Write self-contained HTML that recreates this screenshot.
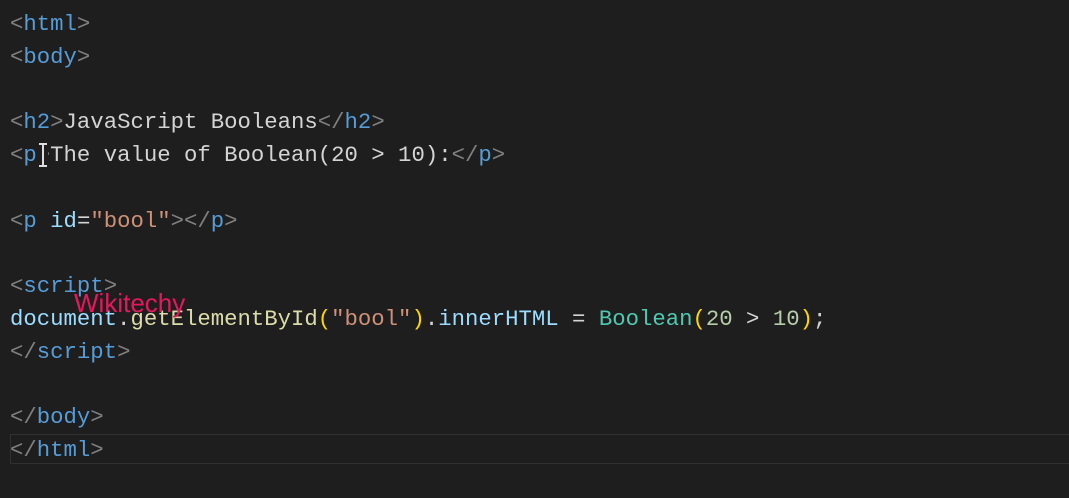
<!DOCTYPE html>
<html><head><style>
html,body{margin:0;padding:0;background:#1e1e1e;width:1069px;height:498px;overflow:hidden}
#c{position:absolute;left:10px;top:8px;font-family:"Liberation Mono",monospace;font-size:22.3px;line-height:32.75px;color:#d4d4d4;white-space:pre}
.b{color:#808080}.t{color:#569cd6}.a{color:#9cdcfe}.s{color:#ce9178}.f{color:#dcdcaa}.c{color:#4ec9b0}.n{color:#b5cea8}.y{color:#ffd700}
#cur{position:absolute;left:10px;top:434px;width:1070px;height:30px;border:1px solid #303030;box-sizing:border-box}
#w{position:absolute;left:74px;top:288px;font-family:"Liberation Sans",sans-serif;font-size:26px;color:#e8175d}
#ib{position:absolute;left:38px;top:143px;width:10px;height:24px;background:#1e1e1e}
#ib:before{content:"";position:absolute;left:4px;top:1px;width:2px;height:22px;background:#ddd}
#ib:after{content:"";position:absolute;left:1px;top:0;width:8px;height:24px;border-top:2px solid #ddd;border-bottom:2px solid #ddd;box-sizing:border-box}
</style></head><body>
<div id="cur"></div>
<div id="c"><span class="b">&lt;</span><span class="t">html</span><span class="b">&gt;</span>
<span class="b">&lt;</span><span class="t">body</span><span class="b">&gt;</span>

<span class="b">&lt;</span><span class="t">h2</span><span class="b">&gt;</span>JavaScript Booleans<span class="b">&lt;/</span><span class="t">h2</span><span class="b">&gt;</span>
<span class="b">&lt;</span><span class="t">p</span><span class="b">&gt;</span>The value of Boolean(20 &gt; 10):<span class="b">&lt;/</span><span class="t">p</span><span class="b">&gt;</span>

<span class="b">&lt;</span><span class="t">p</span> <span class="a">id</span>=<span class="s">"bool"</span><span class="b">&gt;&lt;/</span><span class="t">p</span><span class="b">&gt;</span>

<span class="b">&lt;</span><span class="t">script</span><span class="b">&gt;</span>
<span class="a">document</span>.<span class="f">getElementById</span><span class="y">(</span><span class="s">"bool"</span><span class="y">)</span>.<span class="a">innerHTML</span> = <span class="c">Boolean</span><span class="y">(</span><span class="n">20</span> &gt; <span class="n">10</span><span class="y">)</span>;
<span class="b">&lt;/</span><span class="t">script</span><span class="b">&gt;</span>

<span class="b">&lt;/</span><span class="t">body</span><span class="b">&gt;</span>
<span class="b">&lt;/</span><span class="t">html</span><span class="b">&gt;</span></div>
<div id="ib"></div>
<div id="w">Wikitechy</div>
</body></html>
